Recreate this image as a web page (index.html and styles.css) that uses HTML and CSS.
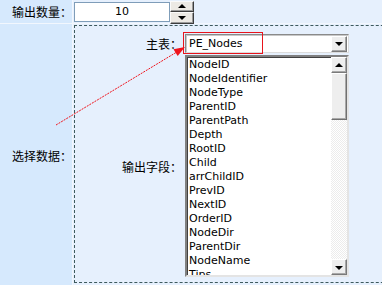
FILE: index.html
```html
<!DOCTYPE html>
<html lang="zh-CN">
 <head>
  <meta charset="utf-8"/>
  <title>选择数据</title>
  <link rel="stylesheet" href="styles.css">
 </head>
 <body>
	<div class="form">
		<div class="label">输出数量：</div>
		<div class="field field-top">
			<div class="num">10</div>
			<div class="spin">
				<span class="spin-btn spin-up"></span>
				<span class="spin-btn spin-down"></span>
			</div>
		</div>

		<div class="label">选择数据：</div>
		<div class="field">
			<div class="box">
				<div class="sub-label">主表：</div>
				<div class="select">
					<span class="select-text">PE_Nodes</span>
					<span class="btn btn-down"></span>
				</div>

				<div class="sub-label">输出字段：</div>
				<div class="listbox">
					<ul class="items">
						<li>NodeID</li>
						<li>NodeIdentifier</li>
						<li>NodeType</li>
						<li>ParentID</li>
						<li>ParentPath</li>
						<li>Depth</li>
						<li>RootID</li>
						<li>Child</li>
						<li>arrChildID</li>
						<li>PrevID</li>
						<li>NextID</li>
						<li>OrderID</li>
						<li>NodeDir</li>
						<li>ParentDir</li>
						<li>NodeName</li>
						<li>Tips</li>
					</ul>
					<div class="scroll">
						<span class="btn btn-up"></span>
						<span class="thumb"></span>
						<span class="track"></span>
						<span class="btn btn-down"></span>
					</div>
				</div>
			</div>
		</div>
	</div>

	<!-- 주석 표시 (빨간 박스 + 화살표) -->
	<svg class="mark" width="382" height="285" viewBox="0 0 382 285">
		<rect x="183.5" y="32.5" width="79" height="21" fill="none" stroke="#e8141c" stroke-width="1"/>
		<line x1="56" y1="125" x2="176" y2="52.5" stroke="#f0141c" stroke-width="1" stroke-dasharray="2 1"/>
		<polygon points="185,47 177.7,56.1 173.5,49.3" fill="#f0141c"/>
	</svg>
 </body>
</html>
```

FILE: styles.css
```css
*{margin:0; padding:0; box-sizing:border-box;}
body{ overflow:hidden; background:#f2f7fe; font-family:"DejaVu Sans", Tahoma, sans-serif; font-size:11px; color:#000;}
li{list-style:none;}

/* 바깥 표 */
.form{ display:grid; grid-template-columns:72px 330px; grid-template-rows:23px 262px; gap:1px; background:#f2f7fe; width:403px;}
	.label{ background:#d6e9fd; padding-left:12px; display:flex; align-items:center;
		font-family:"Noto Sans CJK SC", sans-serif; font-size:12px;}
	.field{ background:#e6f0fd; padding:1px 0 0 1px;}
	.field-top{ display:flex; align-items:center; padding:0 0 0 1px;}

/* 숫자 입력 */
.num{ width:96px; height:20px; background:#fff; border:1px solid #7f9db9; text-align:center; line-height:18px; font-size:11px;}
.spin{ width:24px; height:23px; display:flex; flex-direction:column; margin-top:1px;}
	.spin-btn{ flex:1; background:#ece9e4; border:1px solid #3c3c3c; border-top-color:#fafafa; border-left-color:#fafafa;
		display:flex; align-items:center; justify-content:center; box-shadow:inset -1px -1px 0 #9a9a9a;}
	.spin-btn:after{ content:""; border-left:4px solid transparent; border-right:4px solid transparent;}
	.spin-up:after{ border-bottom:4px solid #000;}
	.spin-down:after{ border-top:4px solid #000;}

/* 점선 박스 */
.box{ border:1px dashed #3e5a5e; height:258px; width:340px; padding:8px 0 5px 0;
	display:grid; grid-template-columns:110px 164px; grid-template-rows:19px 222px; row-gap:2px;}
	.sub-label{ display:flex; align-items:center; justify-content:flex-end; padding-right:3px;
		font-family:"Noto Sans CJK SC", sans-serif; font-size:12px;}

/* 선택 상자 */
.select{ background:#fff; border:1px solid #8a8a8a; border-right-color:#dcdcdc; border-bottom-color:#dcdcdc;
	box-shadow:inset 1px 1px 0 #c8c8c8; display:flex; align-items:center; padding:1px 1px 1px 2px;}
	.select-text{ flex:1; font-size:11px; padding-left:1px;}

/* 스크롤 버튼 */
.btn{ width:16px; height:16px; flex:none; background:#eeeeee; border:1px solid #7a7a7a; border-top-color:#ffffff; border-left-color:#ffffff;
	box-shadow:inset -1px -1px 0 #a8a8a8; display:flex; align-items:center; justify-content:center;}
.btn:after{ content:""; border-left:4px solid transparent; border-right:4px solid transparent;}
.btn-down:after{ border-top:4px solid #000; margin-top:1px;}
.btn-up:after{ border-bottom:4px solid #000; margin-bottom:1px;}

/* 목록 상자 */
.listbox{ background:#fff; border:2px solid #808080; border-right-color:#e4e4e4; border-bottom-color:#e4e4e4;
	box-shadow:inset 1px 1px 0 #404040; display:flex; overflow:hidden;}
	.items{ flex:1; padding:1px 0 0 2px; line-height:14px; overflow:hidden;}
	.scroll{ width:16px; display:flex; flex-direction:column;}
		.thumb{ height:47px; flex:none; background:#eeeeee; border:1px solid #707070; border-top-color:#fff; border-left-color:#fff;
			box-shadow:inset -1px -1px 0 #a8a8a8;}
		.track{ flex:1; background:#fff repeating-conic-gradient(#ececec 0 25%, #fff 0 50%) 0 0/2px 2px;}

.mark{ position:absolute; left:0; top:0; pointer-events:none;}
```
